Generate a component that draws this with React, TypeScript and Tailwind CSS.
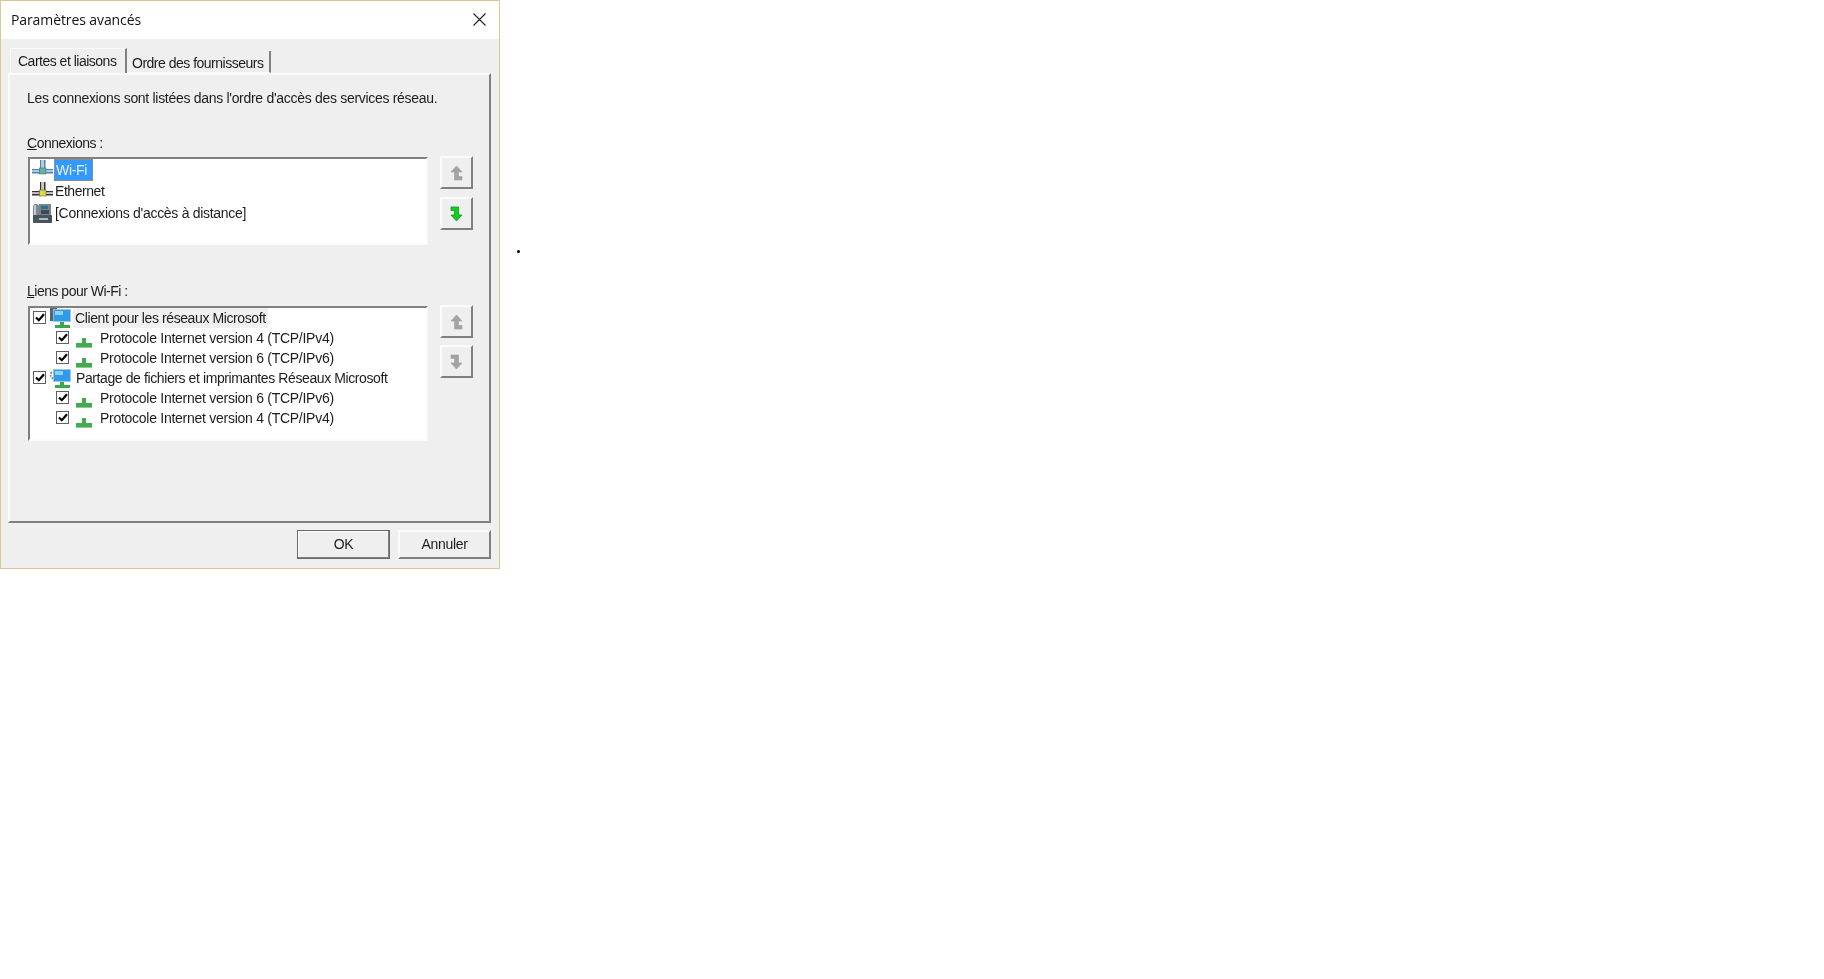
import React from 'react'

function NetIcon({ line, core }: { line: string; core: string }) {
  return (
    <svg width="21" height="20" viewBox="0 0 21 20" className="shrink-0">
      <rect x="0" y="9" width="21" height="1.5" fill={line} />
      <rect x="0" y="12" width="21" height="1.5" fill={line} />
      <rect x="0" y="10.5" width="21" height="1.5" fill="#c9c9c9" />
      <rect x="8" y="0" width="1.5" height="9" fill={line} />
      <rect x="12" y="0" width="1.5" height="9" fill={line} />
      <rect x="9.5" y="0" width="2.5" height="9" fill="#c9c9c9" />
      <rect x="7.5" y="8" width="6.5" height="6" fill={core} stroke="#666" strokeWidth="0.6" />
    </svg>
  )
}

function PhoneIcon() {
  return (
    <svg width="21" height="21" viewBox="0 0 21 21" className="shrink-0">
      <rect x="1" y="1" width="6" height="16" rx="2.5" fill="#7f8b94" />
      <rect x="2" y="2" width="2" height="13" rx="1" fill="#c3ccd2" />
      <rect x="7" y="1" width="12" height="11" fill="#75848e" />
      <rect x="9" y="3" width="7" height="3" fill="#2c6f8f" />
      <rect x="9" y="7" width="8" height="4" fill="#3f4a52" />
      <rect x="1" y="12" width="19" height="8" rx="1" fill="#48535b" />
      <rect x="7" y="15" width="9" height="2" fill="#a5bbc5" />
    </svg>
  )
}

function PcIcon({ gear }: { gear?: boolean }) {
  return (
    <svg width="21" height="21" viewBox="0 0 21 21" className="shrink-0">
      {gear ? (
        <circle cx="4" cy="7" r="3.5" fill="none" stroke="#8a8f94" strokeWidth="2" strokeDasharray="2 1" />
      ) : (
        <rect x="0" y="0" width="7" height="13" fill="#59636b" />
      )}
      <rect x="3.5" y="1.5" width="17" height="12" fill="#2f9be8" stroke="#9dc8e8" strokeWidth="0.8" />
      <rect x="5" y="3" width="8" height="4" fill="#8fd0f7" />
      <rect x="10" y="14" width="4" height="3" fill="#3aa84a" />
      <rect x="5" y="17" width="15" height="3" fill="#3aa84a" />
    </svg>
  )
}

function GreenNet() {
  return (
    <svg width="16" height="12" viewBox="0 0 16 12" className="shrink-0">
      <rect x="6" y="1" width="4" height="6" fill="#45a94f" />
      <rect x="0" y="6" width="16" height="5" fill="#45a94f" />
      <rect x="0" y="10" width="16" height="1" fill="#8ccf92" />
    </svg>
  )
}

function Check() {
  return (
    <span className="-mt-[2px] flex h-[13px] w-[13px] shrink-0 items-center justify-center border border-[#5f5f5f] bg-white">
      <svg width="10" height="9" viewBox="0 0 10 9">
        <path d="M1 4.5 L3.8 7.2 L9 1.2" fill="none" stroke="#000" strokeWidth="2.2" />
      </svg>
    </span>
  )
}

function Arrow({ down, color, edge }: { down?: boolean; color: string; edge: string }) {
  return (
    <svg
      width="13"
      height="16"
      viewBox="0 0 13 16"
      className={down ? 'rotate-180' : ''}
    >
      <path
        d="M6.5 1 L12 7 H8.5 V11.5 H12 V15 H4.5 V7 H1 Z"
        fill={color}
        stroke={edge}
        strokeWidth="0.7"
      />
    </svg>
  )
}

function ArrowButton({ down, active }: { down?: boolean; active?: boolean }) {
  return (
    <button className="flex h-[33px] w-[33px] items-center justify-center border-2 border-t-[#fbfbfb] border-r-[#808080] border-b-[#808080] border-l-[#fbfbfb] bg-[#efefef]">
      <Arrow
        down={down}
        color={active ? '#10d01c' : '#a3a3a3'}
        edge={active ? '#0a8a12' : '#a3a3a3'}
      />
    </button>
  )
}

const protocols = [
  { label: 'Client pour les réseaux Microsoft', top: true },
  { label: 'Protocole Internet version 4 (TCP/IPv4)' },
  { label: 'Protocole Internet version 6 (TCP/IPv6)' },
  { label: 'Partage de fichiers et imprimantes Réseaux Microsoft', top: true, gear: true },
  { label: 'Protocole Internet version 6 (TCP/IPv6)' },
  { label: 'Protocole Internet version 4 (TCP/IPv4)' },
]

export default function App() {
  return (
    <div className="relative min-h-screen whitespace-nowrap bg-white font-['Liberation_Sans',Arial,sans-serif] text-[14px] tracking-[-0.3px] text-[#1c1c1c]">
      <div className="flex h-[569px] w-[500px] flex-col border border-[#d9c88f] bg-[#efefef] blur-[0.35px]">
        <div className="flex h-[38px] shrink-0 items-center justify-between bg-white pr-[13px] pb-[2px] pl-[10px]">
          <span className="font-['Open_Sans',sans-serif] text-[14px] tracking-[-0.1px] text-[#111111]">
            Paramètres avancés
          </span>
          <svg width="13" height="13" viewBox="0 0 13 13">
            <path d="M0.5 0.5 L12.5 12.5 M12.5 0.5 L0.5 12.5" stroke="#222" strokeWidth="1.1" />
          </svg>
        </div>

        <div className="mt-[9px] ml-[9px] flex h-[25px] items-end tracking-[-0.5px]">
          <div className="flex h-[25px] w-[117px] items-start border-t border-r-2 border-l border-t-[#fbfbfb] border-r-[#808080] border-l-[#fbfbfb] pt-[2px] pl-[7px]">
            Cartes et liaisons
          </div>
          <div className="flex h-[22px] w-[144px] items-start border-r-2 border-b border-r-[#808080] border-b-[#fbfbfb] bg-[#efefef] pt-[2px] pl-[5px]">
            Ordre des fournisseurs
          </div>
        </div>

        <div className="ml-[7px] h-[450px] w-[483px] shrink-0 border-2 border-t-[#fbfbfb] border-r-[#808080] border-b-[#808080] border-l-[#fbfbfb] pl-[18px]">
          <p className="mt-[13px] -ml-px h-[20px] leading-[20px]">
            Les connexions sont listées dans l'ordre d'accès des services réseau.
          </p>

          <p className="mt-[25px] -ml-px h-[20px] leading-[20px] tracking-[-0.5px]">
            <span className="underline">C</span>onnexions :
          </p>
          <div className="mt-[4px] flex gap-[12px]">
            <div className="h-[88px] w-[400px] border-2 border-t-[#808080] border-r-[#fafafa] border-b-[#fafafa] border-l-[#808080] bg-white pl-[2px]">
              <div className="flex h-[22px] items-center">
                <NetIcon line="#3f86c6" core="#58b4a8" />
                <span className="ml-px flex h-[22px] w-[39px] items-center border border-dotted border-[#d9822b] bg-[#3399ff] pl-px text-[#e4f1ff]">
                  Wi-Fi
                </span>
              </div>
              <div className="flex h-[21px] items-center">
                <NetIcon line="#333333" core="#e3d83a" />
                <span className="ml-[2px] tracking-[-0.45px]">Ethernet</span>
              </div>
              <div className="flex h-[22px] items-center">
                <PhoneIcon />
                <span className="ml-[2px]">[Connexions d'accès à distance]</span>
              </div>
            </div>
            <div className="-mt-px flex flex-col gap-[8px]">
              <ArrowButton />
              <ArrowButton down active />
            </div>
          </div>

          <p className="mt-[36px] -ml-px h-[20px] leading-[20px] tracking-[-0.5px]">
            <span className="underline">L</span>iens pour Wi-Fi :
          </p>
          <div className="mt-[5px] flex gap-[12px]">
            <div className="h-[135px] w-[400px] border-2 border-t-[#808080] border-r-[#fafafa] border-b-[#fafafa] border-l-[#808080] bg-white">
              {protocols.map((p, i) =>
                p.top ? (
                  <div key={i} className="flex h-[20px] items-center pl-[3px]">
                    <Check />
                    <span className="ml-[4px] flex"><PcIcon gear={p.gear} /></span>
                    <span className={i === 0 ? 'ml-[2px] flex h-[20px] w-[195px] items-center bg-[#f0f0f0] pl-[2px] tracking-[-0.4px]' : 'ml-[5px] tracking-[-0.4px]'}>
                      {p.label}
                    </span>
                  </div>
                ) : (
                  <div key={i} className="flex h-[20px] items-center pl-[26px]">
                    <Check />
                    <span className="mt-[9px] ml-[7px] flex"><GreenNet /></span>
                    <span className="ml-[8px] tracking-[-0.27px]">{p.label}</span>
                  </div>
                ),
              )}
            </div>
            <div className="-mt-px flex flex-col gap-[7px]">
              <ArrowButton />
              <ArrowButton down />
            </div>
          </div>
        </div>

        <div className="flex justify-end gap-[8px] pt-[7px] pr-[8px]">
          <button className="h-[29px] w-[93px] border border-[#6a6a6a] bg-[#efefef] shadow-[inset_-1px_-1px_0_#808080,inset_1px_1px_0_#fbfbfb]">
            OK
          </button>
          <button className="h-[29px] w-[93px] border-2 border-t-[#fbfbfb] border-r-[#808080] border-b-[#808080] border-l-[#fbfbfb] bg-[#efefef]">
            Annuler
          </button>
        </div>
      </div>
      <span className="absolute top-[250px] left-[517px] h-[3px] w-[3px] rounded-full bg-black" />
    </div>
  )
}
